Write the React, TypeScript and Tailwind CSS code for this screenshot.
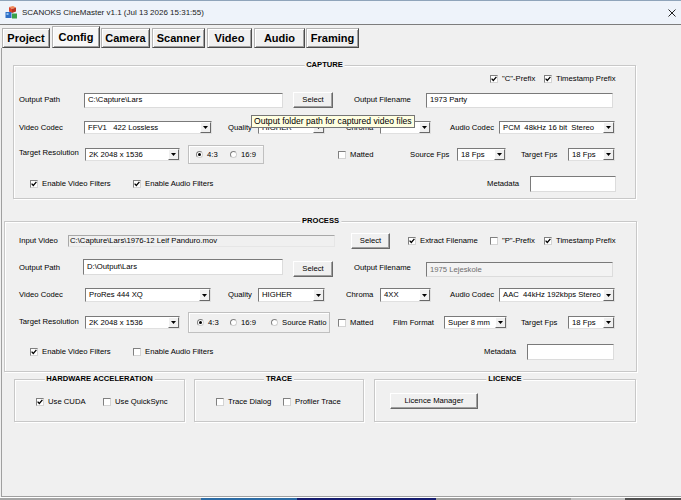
import React from "react";

const T = "text-[7.7px] leading-[10px]";

function Lbl({ c = "", children }: { c?: string; children: React.ReactNode }) {
  return <div className={`shrink-0 whitespace-nowrap text-black ${T} ${c}`}>{children}</div>;
}

function Field({ c = "", v = "", dis = false }: { c?: string; v?: string; dis?: boolean }) {
  return (
    <div
      className={`shrink-0 flex items-center pl-[3px] overflow-hidden whitespace-pre ${T} border border-t-[#7a7a7a] border-l-[#7a7a7a] border-r-[#dcdcdc] border-b-[#dcdcdc] ${
        dis ? "bg-[#f3f3f3] text-[#6d6d6d]" : "bg-white text-black"
      } ${c}`}
    >
      {v}
    </div>
  );
}

function Combo({ c = "", v = "" }: { c?: string; v?: string }) {
  return (
    <div className={`shrink-0 flex items-stretch bg-white border border-t-[#7a7a7a] border-l-[#7a7a7a] border-r-[#e0e0e0] border-b-[#e0e0e0] ${c}`}>
      <div className={`flex-1 flex items-center pl-[3px] whitespace-pre overflow-hidden ${T}`}>{v}</div>
      <div className="w-[11px] flex items-center justify-center bg-[#f0f0f0] border border-t-white border-l-white border-r-[#696969] border-b-[#696969]">
        <svg width="5" height="3" viewBox="0 0 5 3">
          <path d="M0 0H5L2.5 3Z" fill="#000" />
        </svg>
      </div>
    </div>
  );
}

function Btn({ c = "", t }: { c?: string; t: string }) {
  return (
    <div className={`shrink-0 flex items-center justify-center bg-[#f0f0f0] border border-t-white border-l-white border-r-[#696969] border-b-[#696969] shadow-[inset_-1px_-1px_0_#a0a0a0] ${T} ${c}`}>
      {t}
    </div>
  );
}

function Chk({ c = "", on = false, t }: { c?: string; on?: boolean; t: string }) {
  return (
    <div className={`shrink-0 flex items-center gap-[4px] ${c}`}>
      <div className="w-[8px] h-[8px] shrink-0 bg-white border border-t-[#808080] border-l-[#808080] border-r-[#d4d4d4] border-b-[#d4d4d4] flex items-center justify-center">
        {on && (
          <svg width="6" height="6" viewBox="0 0 6 6">
            <path d="M0.6 2.6 L2.3 4.5 L5.4 0.8" fill="none" stroke="#000" strokeWidth="1.3" />
          </svg>
        )}
      </div>
      <span className={`whitespace-nowrap ${T}`}>{t}</span>
    </div>
  );
}

function Radio({ c = "", on = false, t }: { c?: string; on?: boolean; t: string }) {
  return (
    <div className={`shrink-0 flex items-center gap-[4px] ${c}`}>
      <div className="w-[7px] h-[7px] shrink-0 rounded-full bg-white border border-t-[#808080] border-l-[#808080] border-r-[#d0d0d0] border-b-[#d0d0d0] flex items-center justify-center">
        {on && <div className="w-[3px] h-[3px] rounded-full bg-black" />}
      </div>
      <span className={`whitespace-nowrap ${T}`}>{t}</span>
    </div>
  );
}

function Group({ c = "", title, children }: { c?: string; title: string; children?: React.ReactNode }) {
  return (
    <div className={`shrink-0 relative border border-[#c8c8c8] shadow-[1px_1px_0_#ffffff,inset_1px_1px_0_#ffffff] ${c}`}>
      <span className="absolute left-1/2 -translate-x-1/2 -top-[6px] px-[2px] bg-[#f0f0f0] text-[7.6px] leading-[10px] font-bold whitespace-nowrap">
        {title}
      </span>
      {children}
    </div>
  );
}

function Tab({ c = "", t, sel = false }: { c?: string; t: string; sel?: boolean }) {
  return (
    <div
      className={`shrink-0 flex items-center justify-center text-[11px] font-bold bg-[#f0f0f0] border border-t-[#b4b4b4] border-l-[#b4b4b4] border-r-[#4a4a4a] border-b-[#4a4a4a] shadow-[inset_1px_1px_0_#ffffff,inset_-1px_-1px_0_#a0a0a0] ${
        sel ? "h-[22px] bg-[#f7f7f7]" : "h-[20px]"
      } ${c}`}
    >
      {t}
    </div>
  );
}

export default function App() {
  return (
    <div className="relative w-[681px] h-[500px] overflow-hidden bg-[#f0f0f0] text-black font-['Liberation_Sans',Arial,sans-serif]">
      {/* Title bar */}
      <div className="h-[25px] flex items-center border-t border-t-[#8fa4ba] border-b border-b-[#7d7d7d] bg-[#eef3fa]">
        <svg className="ml-[5px] shrink-0" width="13" height="13" viewBox="0 0 13 13">
          <path d="M4 1 L8 0 L11 1.5 L7 3 Z" fill="#f08a5a" />
          <path d="M4 1 L7 3 L7 7 L4 5.5 Z" fill="#d9412a" />
          <path d="M7 3 L11 1.5 L11 5.5 L7 7 Z" fill="#b8321f" />
          <rect x="0.5" y="6" width="6" height="6" fill="#2f6fc7" />
          <rect x="1.5" y="7" width="2" height="2" fill="#8fc0f0" />
          <rect x="7" y="7.5" width="5" height="5" fill="#3aa24a" />
        </svg>
        <span className="ml-[4px] text-[8px] leading-[10px] text-[#1b1b1b] whitespace-nowrap">
          SCANOKS CineMaster v1.1 (Jul 13 2026 15:31:55)
        </span>
        <svg className="ml-auto mr-[5px] shrink-0" width="8" height="8" viewBox="0 0 8 8">
          <path d="M0.5 0.5 L7.5 7.5 M7.5 0.5 L0.5 7.5" stroke="#222" strokeWidth="1" />
        </svg>
      </div>

      {/* Tabs */}
      <div className="h-[23px] flex items-end">
        <Tab c="ml-[2px] w-[48px]" t="Project" />
        <Tab c="ml-[2px] w-[48px]" t="Config" sel />
        <Tab c="ml-[1px] w-[49px]" t="Camera" />
        <Tab c="ml-[2px] w-[53px]" t="Scanner" />
        <Tab c="ml-[2px] w-[45px]" t="Video" />
        <Tab c="ml-[2px] w-[51px]" t="Audio" />
        <Tab c="ml-[1px] w-[53px]" t="Framing" />
      </div>

      {/* Page */}
      <div className="h-[449px] ml-[1px] border-l border-b border-[#a0a0a0] overflow-hidden">
        {/* CAPTURE */}
        <Group c="ml-[11px] mt-[17px] w-[623px] h-[134px]" title="CAPTURE">
          <div className="mt-[6px] h-[14px] flex items-center">
            <Chk c="ml-[476px] w-[54px]" on t={'"C"-Prefix'} />
            <Chk on t="Timestamp Prefix" />
          </div>
          <div className="mt-[6px] h-[16px] flex items-center">
            <Lbl c="ml-[5px] w-[65px]">Output Path</Lbl>
            <Field c="w-[199px] h-[15px]" v={"C:\\Capture\\Lars"} />
            <Btn c="ml-[10px] w-[40px] h-[16px]" t="Select" />
            <Lbl c="ml-[21px] w-[72px]">Output Filename</Lbl>
            <Field c="w-[187px] h-[15px]" v="1973 Party" />
          </div>
          <div className="mt-[13px] h-[13px] flex items-center">
            <Lbl c="ml-[5px] w-[65px]">Video Codec</Lbl>
            <Combo c="w-[128px] h-[13px]" v="FFV1   422 Lossless" />
            <Lbl c="ml-[16px] w-[30px]">Quality</Lbl>
            <Combo c="w-[67px] h-[13px]" v="HIGHER" />
            <Lbl c="ml-[21px] w-[34px]">Chroma</Lbl>
            <Combo c="w-[51px] h-[13px]" v="" />
            <Lbl c="ml-[19px] w-[49px]">Audio Codec</Lbl>
            <Combo c="w-[116px] h-[13px]" v="PCM  48kHz 16 bit  Stereo" />
          </div>
          <div className="mt-[11px] h-[19px] flex items-center">
            <Lbl c="ml-[5px] w-[66px] -mt-[3px]">Target Resolution</Lbl>
            <Combo c="w-[95px] h-[13px]" v="2K 2048 x 1536" />
            <div className="ml-[8px] w-[76px] h-[19px] shrink-0 flex items-center border border-[#c0c0c0] shadow-[inset_1px_1px_0_#ffffff]">
              <Radio c="ml-[7px] w-[34px]" on t="4:3" />
              <Radio t="16:9" />
            </div>
            <Chk c="ml-[74px] w-[72px]" t="Matted" />
            <Lbl c="w-[47px]">Source Fps</Lbl>
            <Combo c="w-[49px] h-[13px]" v="18 Fps" />
            <Lbl c="ml-[15px] w-[47px]">Target Fps</Lbl>
            <Combo c="w-[47px] h-[13px]" v="18 Fps" />
          </div>
          <div className="mt-[12px] h-[16px] flex items-center">
            <Chk c="ml-[16px] w-[103px]" on t="Enable Video Filters" />
            <Chk c="w-[354px]" on t="Enable Audio Filters" />
            <Lbl c="w-[43px]">Metadata</Lbl>
            <Field c="w-[86px] h-[16px]" v="" />
          </div>
        </Group>

        {/* PROCESS */}
        <Group c="ml-[2px] mt-[22px] w-[633px] h-[151px]" title="PROCESS">
          <div className="mt-[11px] h-[16px] flex items-center">
            <Lbl c="ml-[14px] w-[49px]">Input Video</Lbl>
            <Field c="w-[267px] h-[12px] !bg-[#f0f0f0] !text-black !pl-[1px] border-t-[#a8a8a8] border-l-[#a8a8a8] border-r-[#e6e6e6] border-b-[#e6e6e6]" dis v={"C:\\Capture\\Lars\\1976-12 Leif Panduro.mov"} />
            <Btn c="ml-[16px] w-[39px] h-[16px]" t="Select" />
            <Chk c="ml-[18px] w-[82px]" on t="Extract Filename" />
            <Chk c="w-[54px]" t={'"P"-Prefix'} />
            <Chk on t="Timestamp Prefix" />
          </div>
          <div className="mt-[10px] h-[18px] flex items-center">
            <Lbl c="ml-[14px] w-[64px]">Output Path</Lbl>
            <Field c="w-[200px] h-[16px] self-start" v={"D:\\Output\\Lars"} />
            <Btn c="ml-[10px] w-[40px] h-[16px] self-end" t="Select" />
            <Lbl c="ml-[21px] w-[72px]">Output Filename</Lbl>
            <Field c="w-[187px] h-[15px] self-end" dis v="1975 Lejeskole" />
          </div>
          <div className="mt-[11px] h-[14px] flex items-center">
            <Lbl c="ml-[14px] w-[66px]">Video Codec</Lbl>
            <Combo c="w-[126px] h-[14px]" v="ProRes 444 XQ" />
            <Lbl c="ml-[17px] w-[30px]">Quality</Lbl>
            <Combo c="w-[67px] h-[14px]" v="HIGHER" />
            <Lbl c="ml-[21px] w-[34px]">Chroma</Lbl>
            <Combo c="w-[51px] h-[14px]" v="4XX" />
            <Lbl c="ml-[19px] w-[49px]">Audio Codec</Lbl>
            <Combo c="w-[116px] h-[14px]" v="AAC  44kHz 192kbps Stereo" />
          </div>
          <div className="mt-[10px] h-[21px] flex items-center">
            <Lbl c="ml-[14px] w-[66px] -mt-[2px]">Target Resolution</Lbl>
            <Combo c="w-[95px] h-[13px]" v="2K 2048 x 1536" />
            <div className="ml-[8px] w-[142px] h-[21px] shrink-0 flex items-center border border-[#c0c0c0] shadow-[inset_1px_1px_0_#ffffff]">
              <Radio c="ml-[8px] w-[33px]" on t="4:3" />
              <Radio c="w-[41px]" t="16:9" />
              <Radio t="Source Ratio" />
            </div>
            <Chk c="ml-[8px] w-[55px]" t="Matted" />
            <Lbl c="w-[51px]">Film Format</Lbl>
            <Combo c="w-[63px] h-[13px]" v="Super 8 mm" />
            <Lbl c="ml-[14px] w-[47px]">Target Fps</Lbl>
            <Combo c="w-[47px] h-[13px]" v="18 Fps" />
          </div>
          <div className="mt-[11px] h-[16px] flex items-center">
            <Chk c="ml-[25px] w-[103px]" on t="Enable Video Filters" />
            <Chk c="w-[351px]" t="Enable Audio Filters" />
            <Lbl c="w-[43px]">Metadata</Lbl>
            <Field c="w-[87px] h-[16px]" v="" />
          </div>
        </Group>

        {/* Bottom groups */}
        <div className="mt-[7px] flex items-start">
          <Group c="ml-[12px] w-[171px] h-[43px]" title="HARDWARE ACCELERATION">
            <div className="mt-[15px] h-[14px] flex items-center">
              <Chk c="ml-[21px] w-[67px]" on t="Use CUDA" />
              <Chk t="Use QuickSync" />
            </div>
          </Group>
          <Group c="ml-[9px] w-[170px] h-[43px]" title="TRACE">
            <div className="mt-[15px] h-[14px] flex items-center">
              <Chk c="ml-[21px] w-[67px]" t="Trace Dialog" />
              <Chk t="Profiler Trace" />
            </div>
          </Group>
          <Group c="ml-[10px] w-[262px] h-[43px]" title="LICENCE">
            <div className="mt-[13px] flex">
              <Btn c="ml-[15px] w-[88px] h-[16px]" t="Licence Manager" />
            </div>
          </Group>
        </div>
      </div>

      <div className="h-[1px] bg-white" />
      <div className="h-[2px] flex">
        <div className="w-[201px] bg-[#a6a6a6]" />
        <div className="w-[96px] bg-[#2c6ca5]" />
        <div className="w-[139px] bg-[#151b6e]" />
        <div className="w-[135px] bg-[#9c9c9c]" />
        <div className="w-[54px] bg-[#c2c2c2]" />
        <div className="flex-1 bg-[#505050]" />
      </div>

      {/* Tooltip */}
      <div className="absolute left-[251px] top-[115px] w-[164px] h-[13px] flex items-center pl-[2px] bg-[#ffffe1] border border-[#767676] text-[8.6px] leading-[11px] whitespace-nowrap">
        Output folder path for captured video files
      </div>
    </div>
  );
}
